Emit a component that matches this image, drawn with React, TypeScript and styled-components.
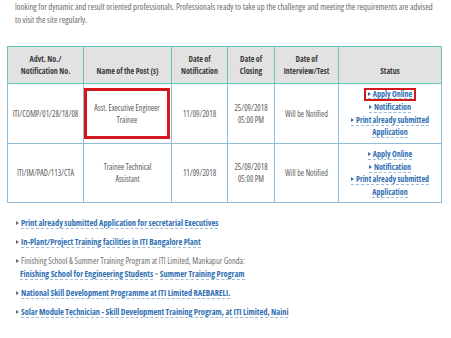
import styled, { createGlobalStyle } from "styled-components";

const GlobalStyle = createGlobalStyle`
  html, body {
    margin: 0;
    padding: 0;
    background: #ffffff;
    overflow: hidden;
  }
  body {
    font-family: "Liberation Sans Narrow", "Open Sans", "Liberation Sans", sans-serif;
    font-stretch: condensed;
  }
`;

const Page = styled.div`
  width: 451px;
  height: 338px;
  overflow: hidden;
`;

const Intro = styled.p`
  margin: -12px 0 0;
  padding: 0 15px;
  font-size: 8.6px;
  line-height: 13px;
  color: #6a6a6a;
  white-space: nowrap;
`;

const Table = styled.table`
  margin: 19px 0 0 7px;
  width: 434px;
  border-collapse: collapse;
  table-layout: fixed;
  font-size: 8px;
`;

const Th = styled.th`
  background: #e2e2e2;
  border: 1px solid #62c9b9;
  color: #3c3c3c;
  font-weight: 700;
  line-height: 12px;
  height: 30px;
  padding: 0 3px 6px;
  vertical-align: bottom;
  text-align: center;
`;

const Td = styled.td`
  border: 1px solid #93bcd8;
  color: #5a5a5a;
  line-height: 12px;
  padding: 4px 2px;
  vertical-align: middle;
  text-align: center;
`;

const Marked = styled.div<{ $tight?: boolean }>`
  display: inline-flex;
  align-items: center;
  justify-content: center;
  box-sizing: border-box;
  border: ${(p) => (p.$tight ? "2px" : "3px")} solid #d3171d;
  ${(p) =>
    p.$tight
      ? "padding: 0 2px; line-height: 8px;"
      : "width: 86px; height: 51px; margin-left: -2px; padding: 0 4px;"}
`;

const Link = styled.a`
  color: #2f6fb3;
  font-weight: 700;
  text-decoration: none;
  border-bottom: 1px dashed #9dbcd9;
  &::before {
    content: "";
    display: inline-block;
    width: 0;
    height: 0;
    margin: 0 2px 1px 0;
    border-top: 2.5px solid transparent;
    border-bottom: 2.5px solid transparent;
    border-left: 3px solid #2f6fb3;
  }
`;

const PlainLink = styled.a`
  color: #2f6fb3;
  font-weight: 700;
  text-decoration: none;
  border-bottom: 1px dashed #9dbcd9;
`;

const StatusLine = styled.div`
  line-height: 12.6px;
  height: 12.6px;
`;

const List = styled.ul`
  list-style: none;
  margin: 13px 0 0;
  padding: 0 0 0 16px;
  font-size: 8.4px;
`;

const Item = styled.li`
  line-height: 13px;
  margin-bottom: 6px;
  color: #707070;
  &::before {
    content: "";
    display: inline-block;
    width: 0;
    height: 0;
    margin: 0 2px 1px 0;
    border-top: 2.5px solid transparent;
    border-bottom: 2.5px solid transparent;
    border-left: 3px solid #5f6f80;
  }
`;

const Sub = styled.div`
  padding-left: 4px;
  color: #707070;
`;

const statusLinks = (marked: boolean) => (
  <>
    <StatusLine>
      {marked ? (
        <Marked $tight>
          <Link href="#">Apply Online</Link>
        </Marked>
      ) : (
        <Link href="#">Apply Online</Link>
      )}
    </StatusLine>
    <StatusLine>
      <Link href="#">Notification</Link>
    </StatusLine>
    <StatusLine>
      <Link href="#">Print already submitted</Link>
    </StatusLine>
    <StatusLine>
      <PlainLink href="#">Application</PlainLink>
    </StatusLine>
  </>
);

export default function App() {
  return (
    <Page>
      <GlobalStyle />
      <Intro>
        ITI Limited, a premier telecom company of the country, has always been a people company and offers exciting careers. ITI is always
        <br />
        looking for dynamic and result oriented professionals. Professionals ready to take up the challenge and meeting the requirements are advised
        <br />
        to visit the site regularly.
      </Intro>

      <Table>
        <colgroup>
          <col style={{ width: 76 }} />
          <col style={{ width: 88 }} />
          <col style={{ width: 56 }} />
          <col style={{ width: 47 }} />
          <col style={{ width: 64 }} />
          <col style={{ width: 103 }} />
        </colgroup>
        <thead>
          <tr>
            <Th>
              Advt. No./
              <br />
              Notification No.
            </Th>
            <Th>Name of the Post (s)</Th>
            <Th>
              Date of
              <br />
              Notification
            </Th>
            <Th>
              Date of
              <br />
              Closing
            </Th>
            <Th>
              Date of
              <br />
              Interview/Test
            </Th>
            <Th>Status</Th>
          </tr>
        </thead>
        <tbody>
          <tr>
            <Td>ITI/COMP/01/28/18/08</Td>
            <Td>
              <Marked>
                Asst. Executive Engineer
                <br />
                Trainee
              </Marked>
            </Td>
            <Td>11/09/2018</Td>
            <Td>
              25/09/2018
              <br />
              05:00 PM
            </Td>
            <Td>Will be Notified</Td>
            <Td>{statusLinks(true)}</Td>
          </tr>
          <tr>
            <Td>ITI/IM/PAD/113/CTA</Td>
            <Td>
              Trainee Technical
              <br />
              Assistant
            </Td>
            <Td>11/09/2018</Td>
            <Td>
              25/09/2018
              <br />
              05:00 PM
            </Td>
            <Td>Will be Notified</Td>
            <Td>{statusLinks(false)}</Td>
          </tr>
        </tbody>
      </Table>

      <List>
        <Item>
          <PlainLink href="#">Print already submitted Application for secretarial Executives</PlainLink>
        </Item>
        <Item>
          <PlainLink href="#">In-Plant/Project Training facilities in ITI Bangalore Plant</PlainLink>
        </Item>
        <Item>
          Finishing School &amp; Summer Training Program at ITI Limited, Mankapur Gonda:
          <Sub>
            <PlainLink href="#">Finishing School for Engineering Students</PlainLink> ~{" "}
            <PlainLink href="#">Summer Training Program</PlainLink>
          </Sub>
        </Item>
        <Item>
          <PlainLink href="#">National Skill Development Programme at ITI Limited RAEBARELI.</PlainLink>
        </Item>
        <Item>
          <PlainLink href="#">Solar Module Technician - Skill Development Training Program, at ITI Limited, Naini</PlainLink>
        </Item>
      </List>
    </Page>
  );
}
